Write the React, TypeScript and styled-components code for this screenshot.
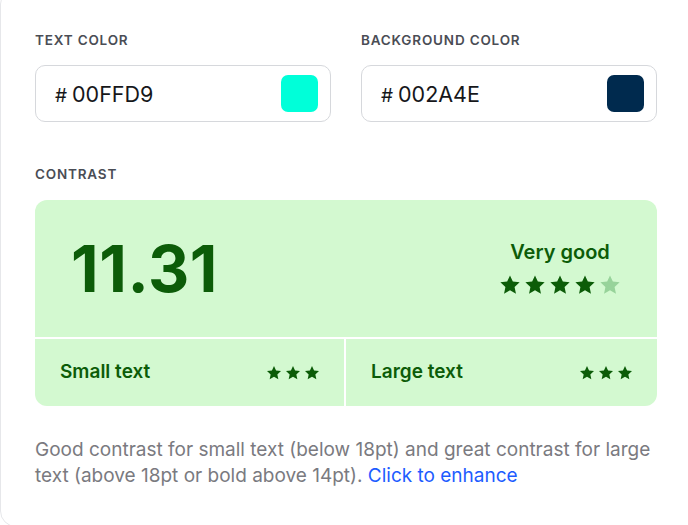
import React from "react";
import styled, { createGlobalStyle } from "styled-components";

const Global = createGlobalStyle`
  html, body { margin: 0; padding: 0; background: #ffffff; overflow: hidden; }
  body { font-family: Inter, "Noto Sans", sans-serif; }
`;

const Card = styled.div`
  box-sizing: border-box;
  width: 720px;
  margin-top: -12px;
  padding: 43px 34px 37px;
  border: 1px solid #e6e7ea;
  border-radius: 16px;
  background: #fff;
`;

const Inner = styled.div`
  width: 622px;
  display: flex;
  flex-direction: column;
`;

const Fields = styled.div`
  display: grid;
  grid-template-columns: 1fr 1fr;
  column-gap: 30px;
`;

const Field = styled.div`
  display: flex;
  flex-direction: column;
`;

const Label = styled.div`
  font-size: 13.5px;
  line-height: 17px;
  font-weight: 600;
  letter-spacing: 0.06em;
  text-transform: uppercase;
  color: #4a4d55;
  margin-bottom: 16px;
`;

const InputBox = styled.div`
  box-sizing: border-box;
  height: 57px;
  border: 1px solid #d6d8dc;
  border-radius: 10px;
  display: flex;
  align-items: center;
  justify-content: space-between;
  padding: 0 12px 0 19px;
`;

const HexText = styled.span`
  font-size: 21.5px;
  color: #16171a;
`;

const Hash = styled.span`
  font-size: 19px;
  margin-right: 5px;
`;

const Swatch = styled.div<{ $color: string }>`
  width: 37px;
  height: 37px;
  border-radius: 7px;
  background: ${(p) => p.$color};
`;

const ContrastLabel = styled(Label)`
  margin-top: 44px;
  margin-bottom: 17px;
`;

const Result = styled.div`
  border-radius: 12px;
  overflow: hidden;
  display: flex;
  flex-direction: column;
  gap: 2px;
  background: #ffffff;
`;

const ResultTop = styled.div`
  height: 137px;
  display: flex;
  align-items: center;
  justify-content: space-between;
  padding: 0 36px 0 36px;
  background: #d3f9d0;
`;

const Ratio = styled.div`
  font-size: 64px;
  font-weight: 700;
  letter-spacing: 0.6px;
  color: #0c5c08;
  line-height: 1;
  margin-top: 0px;
`;

const Rating = styled.div`
  display: flex;
  flex-direction: column;
  align-items: center;
  gap: 10px;
  margin-top: -2px;
`;

const RatingText = styled.div`
  font-size: 20px;
  font-weight: 600;
  color: #0c5c08;
`;

const Stars = styled.div<{ $gap: number }>`
  display: flex;
  gap: ${(p) => p.$gap}px;
`;

const Bottom = styled.div`
  display: grid;
  grid-template-columns: 309px 1fr;
  column-gap: 2px;
`;

const Cell = styled.div`
  height: 67px;
  background: #d3f9d0;
  display: flex;
  align-items: center;
  justify-content: space-between;
  padding: 0 24px 0 25px;
`;

const CellText = styled.span`
  font-size: 19px;
  font-weight: 600;
  color: #0c5c08;
  margin-top: -2px;
`;

const Note = styled.p`
  margin: 31px 0 0;
  font-size: 19px;
  line-height: 26px;
  color: #7a7a80;
`;

const Link = styled.a`
  color: #1d5cff;
  text-decoration: none;
  cursor: pointer;
`;

const Star = ({ size, color }: { size: number; color: string }) => (
  <svg width={size} height={size} viewBox="0 0 24 24">
    <polygon
      fill={color}
      points="12,1.5 15.1,8.1 22.5,9 17,14.1 18.5,21.5 12,17.8 5.5,21.5 7,14.1 1.5,9 8.9,8.1"
    />
  </svg>
);

const DARK = "#0c5c08";
const FADED = "#97d39a";

export default function App() {
  return (
    <>
      <Global />
      <Card>
        <Inner>
          <Fields>
            <Field>
              <Label>Text color</Label>
              <InputBox>
                <HexText>
                  <Hash>#</Hash>00FFD9
                </HexText>
                <Swatch $color="#00FFD9" />
              </InputBox>
            </Field>
            <Field>
              <Label>Background color</Label>
              <InputBox>
                <HexText>
                  <Hash>#</Hash>002A4E
                </HexText>
                <Swatch $color="#002A4E" />
              </InputBox>
            </Field>
          </Fields>
          <ContrastLabel>Contrast</ContrastLabel>
          <Result>
            <ResultTop>
              <Ratio>11.31</Ratio>
              <Rating>
                <RatingText>Very good</RatingText>
                <Stars $gap={3}>
                  {[0, 1, 2, 3, 4].map((i) => (
                    <Star key={i} size={22} color={i < 4 ? DARK : FADED} />
                  ))}
                </Stars>
              </Rating>
            </ResultTop>
            <Bottom>
              <Cell>
                <CellText>Small text</CellText>
                <Stars $gap={3}>
                  {[0, 1, 2].map((i) => (
                    <Star key={i} size={16} color={DARK} />
                  ))}
                </Stars>
              </Cell>
              <Cell>
                <CellText>Large text</CellText>
                <Stars $gap={3}>
                  {[0, 1, 2].map((i) => (
                    <Star key={i} size={16} color={DARK} />
                  ))}
                </Stars>
              </Cell>
            </Bottom>
          </Result>
          <Note>
            Good contrast for small text (below 18pt) and great contrast for large
            text (above 18pt or bold above 14pt). <Link>Click to enhance</Link>
          </Note>
        </Inner>
      </Card>
    </>
  );
}
